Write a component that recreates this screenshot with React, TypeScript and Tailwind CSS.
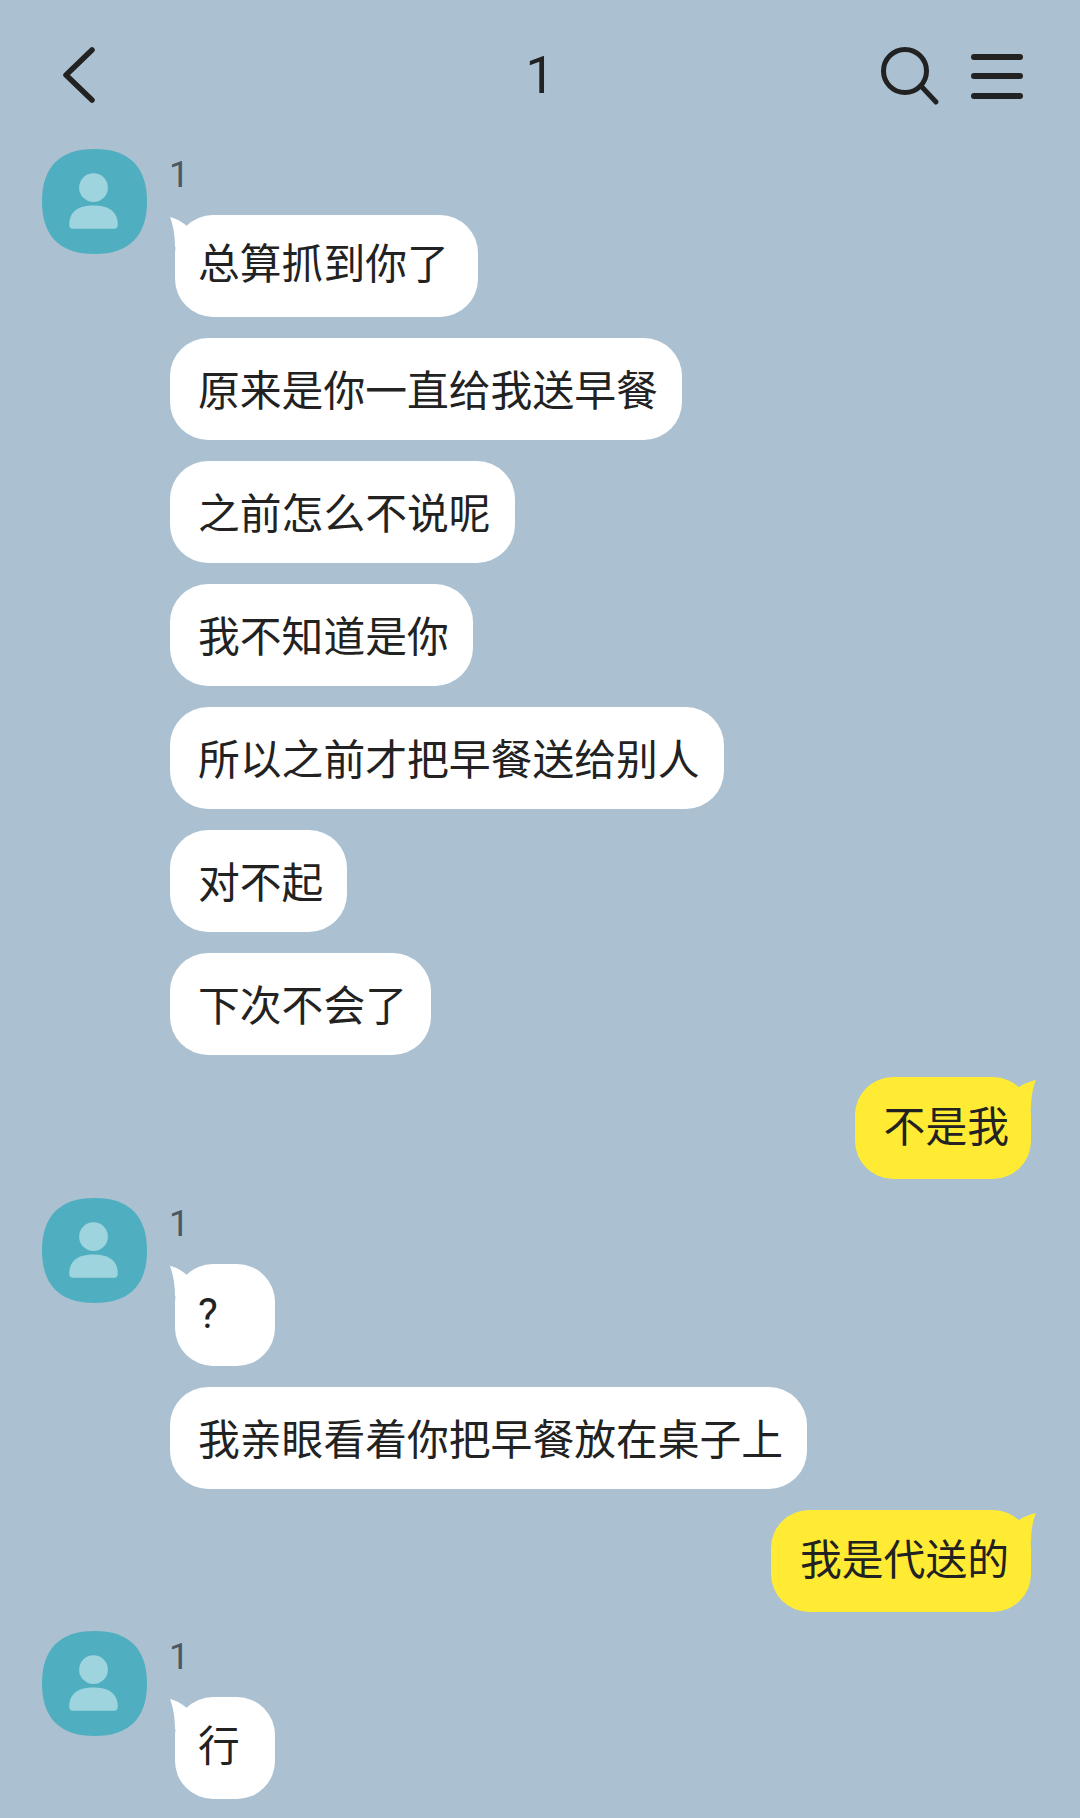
const FONT = "font-['Roboto','Noto_Sans_CJK_SC','Noto_Sans',sans-serif]";

function Avatar() {
  return (
    <svg width="105" height="105" viewBox="0 0 106 106" className="shrink-0">
      <path d="M53 0C88 0 106 18 106 53C106 88 88 106 53 106C18 106 0 88 0 53C0 18 18 0 53 0Z" fill="#4fafc0" />
      <circle cx="52" cy="39" r="14.5" fill="#9dd4dd" />
      <path d="M27.500 76.500C27.500 62 38 57 52 57C66 57 76.500 62 76.500 76.500C76.500 79 75 80.500 73 80.500H31C29 80.500 27.500 79 27.500 76.500Z" fill="#9dd4dd" />
    </svg>
  );
}

function Bubble({ text, tail, me }: { text: string; tail?: boolean; me?: boolean }) {
  const fill = me ? "#ffeb33" : "#ffffff";
  // incoming text sits off-centre in the bubble, the tailed one more so
  const box = me
    ? "self-end bg-[#ffeb33] pl-[29px] pr-[22px]"
    : tail
      ? "ml-[5px] self-start bg-white pl-[23px] pr-[29px] pb-[3px]"
      : "self-start bg-white pl-[28px] pr-[24px] pt-[6px]";
  return (
    <div className={`relative flex h-[102px] min-w-[100px] items-center rounded-[38px] text-[41.8px] leading-none text-[#222222] ${box}`}>
      {text}
      {tail && !me && (
        <svg width="30" height="32" viewBox="0 0 30 32" className="absolute -left-[6px] top-0">
          <path d="M1 2C6 3 12 6 18 11L30 11L30 32L6 32C6 20 4 10 1 2Z" fill={fill} />
        </svg>
      )}
      {tail && me && (
        <svg width="30" height="32" viewBox="0 0 30 32" className="absolute -right-[6px] top-0">
          <path d="M29 3C24 4 18 6 12 10L0 10L0 32L24 32C24 20 26 10 29 3Z" fill={fill} />
        </svg>
      )}
    </div>
  );
}

function Incoming({ messages }: { messages: string[] }) {
  return (
    <div className="flex gap-[23px] pl-[42px]">
      <Avatar />
      <div className="flex flex-col">
        <div className="-ml-[1px] h-[66px] pt-[6px] text-[36px] leading-[40px] text-[#4b5762]">1</div>
        <div className="flex flex-col gap-[21px]">
          {messages.map((m, i) => (
            <Bubble key={m} text={m} tail={i === 0} />
          ))}
        </div>
      </div>
    </div>
  );
}

function Outgoing({ text }: { text: string }) {
  return (
    <div className="flex justify-end pr-[49px]">
      <Bubble text={text} tail me />
    </div>
  );
}

export default function App() {
  return (
    <div className={`h-[1818px] w-[1080px] overflow-hidden bg-[#abc1d1] ${FONT}`}>
      <header className="grid h-[149px] grid-cols-3 items-center pt-[2px]">
        <div className="pl-[60px]">
          <svg width="40" height="58" viewBox="0 0 40 58" fill="none" stroke="#222222" strokeWidth="5.500" strokeLinecap="round" strokeLinejoin="round">
            <path d="M32 3L6 28L32 53" />
          </svg>
        </div>
        <div className="text-center text-[52px] leading-none text-[#222222]">1</div>
        <div className="flex items-center justify-end gap-[31px] pr-[57px]">
          <svg width="60" height="60" viewBox="0 0 60 60" fill="none" stroke="#222222" strokeWidth="5" strokeLinecap="round">
            <circle cx="25" cy="25" r="21.500" />
            <path d="M41 40L56 56" />
          </svg>
          <svg width="52" height="46" viewBox="0 0 52 46" fill="none" stroke="#222222" strokeWidth="6" strokeLinecap="round">
            <path d="M3 4H49M3 23H49M3 43H49" />
          </svg>
        </div>
      </header>

      <div className="flex flex-col">
        <Incoming messages={["总算抓到你了", "原来是你一直给我送早餐", "之前怎么不说呢", "我不知道是你", "所以之前才把早餐送给别人", "对不起", "下次不会了"]} />
        <div className="mt-[22px]">
          <Outgoing text="不是我" />
        </div>
        <div className="mt-[19px]">
          <Incoming messages={["?", "我亲眼看着你把早餐放在桌子上"]} />
        </div>
        <div className="mt-[21px]">
          <Outgoing text="我是代送的" />
        </div>
        <div className="mt-[19px]">
          <Incoming messages={["行"]} />
        </div>
      </div>
    </div>
  );
}
